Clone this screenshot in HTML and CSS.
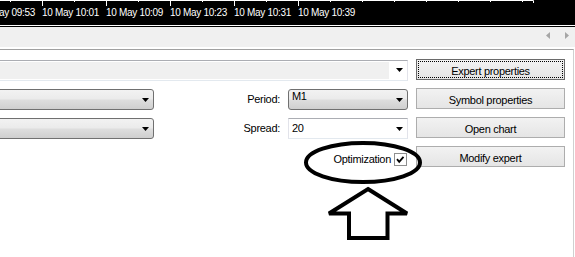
FILE: index.html
```html
<!DOCTYPE html>
<html lang="en">
<head>
<meta charset="utf-8">
<title>Tester settings</title>
<link rel="stylesheet" href="styles.css">
</head>
<body>
<div class="window">
  <div class="chart">
    <svg class="ticks" width="575" height="7" viewBox="0 0 575 7">
      <path d="M0 0.5H533.5V3 M10.5 0V2 M42.5 0V6 M74.5 0V2 M106.5 0V6 M138.5 0V2 M170.5 0V6 M202.5 0V2 M234.5 0V6 M266.5 0V2 M298.5 0V6 M330.5 0V2 M362.5 0V2 M394.5 0V2 M426.5 0V2 M458.5 0V2 M490.5 0V2 M522.5 0V2" stroke="#fff" stroke-width="1" fill="none"/>
    </svg>
    <div class="time-scale">
      <span>10 May 09:53</span>
      <span>10 May 10:01</span>
      <span>10 May 10:09</span>
      <span>10 May 10:23</span>
      <span>10 May 10:31</span>
      <span>10 May 10:39</span>
    </div>
  </div>
  <div class="tabbar">
    <span class="scroll scroll-left"></span>
    <span class="scroll scroll-right"></span>
  </div>
  <div class="panel">
    <div class="settings">
      <div class="fields">
        <div class="combo combo-edit combo-expert"><span class="combo-value"></span><span class="arrow"></span></div>

        <div class="combo combo-list"><span class="combo-text"></span><span class="arrow"></span></div>
        <span class="field-label">Period:</span>
        <div class="combo combo-list"><span class="combo-text">M1</span><span class="arrow"></span></div>

        <div class="combo combo-list"><span class="combo-text"></span><span class="arrow"></span></div>
        <span class="field-label">Spread:</span>
        <div class="combo combo-edit"><span class="combo-text">20</span><span class="arrow"></span></div>

        <div class="option">
          <span>Optimization</span>
          <span class="checkbox"><svg width="11" height="11" viewBox="0 0 11 11"><path d="M2 5.2 L4.2 7.8 L8.5 2.8" fill="none" stroke="#000" stroke-width="1.8"/></svg></span>
        </div>
      </div>
      <div class="actions">
        <button class="btn btn-default">Expert properties</button>
        <button class="btn">Symbol properties</button>
        <button class="btn">Open chart</button>
        <button class="btn">Modify expert</button>
      </div>
    </div>
  </div>
  <svg class="annotation" width="575" height="257" viewBox="0 0 575 257">
    <ellipse cx="363" cy="162.5" rx="57" ry="19.5" fill="none" stroke="#000" stroke-width="4"/>
    <polygon points="368,189 407,213.5 387.5,213.5 387.5,238 349,238 349,213.5 329,213.5" fill="none" stroke="#000" stroke-width="4" stroke-miterlimit="2"/>
  </svg>
</div>
</body>
</html>
```
FILE: styles.css
```css
* { box-sizing: border-box; }
html, body { margin: 0; padding: 0; }
body {
  width: 575px;
  height: 257px;
  overflow: hidden;
  background: #fff;
  font-family: "Liberation Sans", Arial, sans-serif;
  font-size: 11px;
  color: #000;
}
.window { position: relative; width: 575px; height: 257px; }

/* chart time axis */
.chart {
  height: 26px;
  background: #000;
  border-bottom: 1px solid #fff;
  overflow: hidden;
}
.ticks { display: block; }
.time-scale {
  display: flex;
  margin-left: -22px;
  color: #fff;
  font-size: 10px;
  line-height: 12px;
  letter-spacing: -0.3px;
  white-space: nowrap;
}
.time-scale span { flex: 0 0 64px; }

/* tab strip */
.tabbar {
  height: 23px;
  background: #f0f0f0;
  border-top: 1px solid #000;
  border-bottom: 2px solid #fff;
  display: flex;
  justify-content: flex-end;
  align-items: flex-start;
  gap: 15px;
  padding: 5px 6px 0 0;
}
.scroll { width: 4px; height: 7px; background: #a6a6a6; }
.scroll-left { clip-path: polygon(100% 0, 0 50%, 100% 100%); }
.scroll-right { clip-path: polygon(0 0, 100% 50%, 0 100%); }

/* settings panel */
.panel {
  width: 574px;
  height: 208px;
  border-top: 1px solid #a0a0a0;
  border-right: 1px solid #d0d0d0;
  padding-top: 9px;
}
.settings {
  display: flex;
  align-items: flex-start;
  gap: 8px;
  margin-left: -10px;
}
.fields {
  flex: 0 0 418px;
  display: grid;
  grid-template-columns: 164px 1fr 120px;
  grid-auto-rows: 21px;
  row-gap: 8px;
  padding-top: 1px;
}
.actions {
  flex: 0 0 149px;
  display: flex;
  flex-direction: column;
  gap: 8px;
}

/* combo boxes */
.combo {
  display: flex;
  align-items: center;
  height: 21px;
  padding: 0 4px 0 3px;
}
.combo-edit {
  background: #fff;
  border: 1px solid;
  border-color: #abadb3 #e2e3ea #e3e9ef #e2e3ea;
}
.combo-list {
  align-items: flex-start;
  border: 1px solid #707070;
  border-radius: 3px;
  background: linear-gradient(#f2f2f2, #ebebeb 45%, #dddddd 55%, #cfcfcf);
}
.combo-expert {
  grid-column: 1 / 4;
  align-items: stretch;
  padding: 1px 4px 1px 0;
}
.combo-value {
  flex: 1;
  margin-right: 7px;
  background: #f0f0f0;
}
.combo-text {
  flex: 1;
  line-height: 13px;
  letter-spacing: -0.3px;
}
.arrow {
  align-self: flex-start;
  flex: 0 0 7px;
  width: 7px;
  height: 4px;
  margin-top: 8px;
  background: #000;
  clip-path: polygon(0 0, 100% 0, 50% 100%);
}
.combo-expert .arrow { margin-top: 6px; }

.field-label {
  align-self: center;
  text-align: right;
  padding-right: 8px;
  line-height: 13px;
  letter-spacing: -0.3px;
}

.option {
  grid-column: 2 / 4;
  display: flex;
  justify-content: flex-end;
  align-items: flex-start;
  gap: 3px;
  padding: 6px 1px 0 0;
  line-height: 13px;
  letter-spacing: -0.3px;
}
.checkbox {
  width: 13px;
  height: 13px;
  border: 1px solid #8e8f8f;
  background: #fff;
}
.checkbox svg { display: block; }

/* buttons */
.btn {
  display: block;
  width: 149px;
  height: 21px;
  margin: 0;
  padding: 4px 0 1px;
  border: 1px solid #adadad;
  border-radius: 0;
  background: linear-gradient(#f2f2f2, #e5e5e5);
  font-family: inherit;
  font-size: 11px;
  line-height: 14px;
  letter-spacing: -0.3px;
  color: #000;
  text-align: center;
}
.btn-default {
  border-color: #6a6a6a;
  outline: 1px dotted #000;
  outline-offset: -3px;
}

/* hand-drawn annotation over the dialog */
.annotation {
  position: absolute;
  left: 0;
  top: 0;
  pointer-events: none;
}
```
